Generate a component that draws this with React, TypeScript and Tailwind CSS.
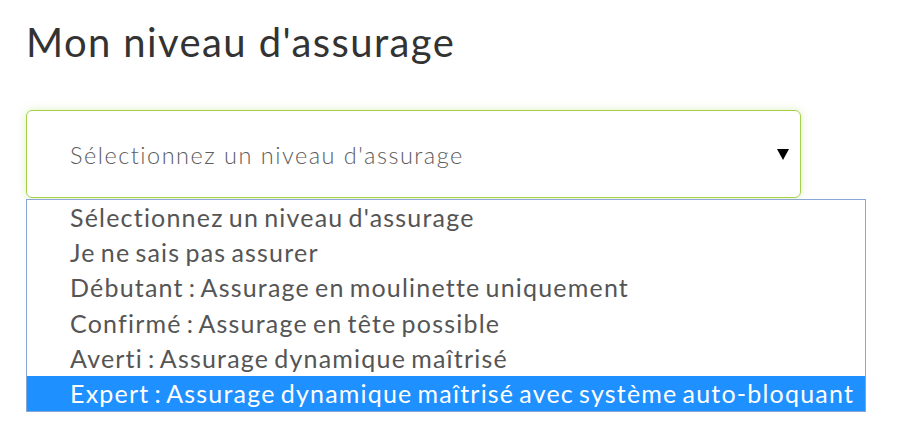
import React from "react";

const options = [
  "Sélectionnez un niveau d'assurage",
  "Je ne sais pas assurer",
  "Débutant : Assurage en moulinette uniquement",
  "Confirmé : Assurage en tête possible",
  "Averti : Assurage dynamique maîtrisé",
  "Expert : Assurage dynamique maîtrisé avec système auto-bloquant",
];

export default function App() {
  return (
    <div className="w-[899px] h-[439px] bg-white font-['Lato','Noto_Sans',sans-serif] pl-[26px] pt-[17px]">
      <h1 className="text-[40px] leading-[50px] tracking-[1.4px] text-[#333333] font-normal">Mon niveau d'assurage</h1>
      <div className="mt-[43px] w-[775px] h-[88px] rounded-[6px] border-[1.5px] border-[#a4d04a] shadow-[0_0_8px_rgba(164,208,74,0.35)] flex items-center pl-[43px] pr-[11px]">
        <span className="flex-1 text-[23.5px] tracking-[1.5px] text-[#5c5c5c] font-light pt-[4px]">Sélectionnez un niveau d'assurage</span>
        <span className="w-0 h-0 border-l-[6px] border-r-[6px] border-t-[11px] border-l-transparent border-r-transparent border-t-black" />
      </div>
      <div className="mt-[1px] w-[840px] border border-[#8aa6d6] bg-white">
        {options.map((o, i) => (
          <div
            key={o}
            className={
              "h-[35.2px] leading-[35.2px] pl-[43px] text-[25px] tracking-[1.2px] [word-spacing:-2.5px] whitespace-nowrap " +
              (i === options.length - 1 ? "bg-[#1e90ff] text-white" : "text-[#555555]")
            }
          >
            {o}
          </div>
        ))}
      </div>
    </div>
  );
}
